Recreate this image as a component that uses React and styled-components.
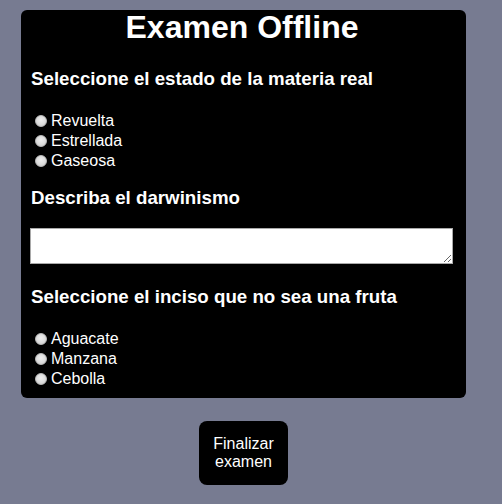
import React from 'react';
import styled, { createGlobalStyle } from 'styled-components';

const GlobalStyle = createGlobalStyle`
  html, body {
    margin: 0;
    padding: 0;
    background: #777b91;
    font-family: "Liberation Sans", Arial, sans-serif;
  }
`;

const Page = styled.div`
  width: 445px;
  margin-left: 21px;
  padding-top: 10px;
  display: flex;
  flex-direction: column;
  align-items: center;
`;

const Card = styled.form`
  box-sizing: border-box;
  width: 100%;
  padding: 0 13px 9px 10px;
  background: #000;
  color: #fff;
  border-radius: 6px;
  display: flex;
  flex-direction: column;
`;

const Title = styled.h1`
  margin: 0;
  font-size: 32px;
  line-height: 35px;
  font-weight: bold;
  text-align: center;
`;

const Question = styled.h3`
  margin: ${(p) => p.gap}px 0 0;
  font-size: 18.72px;
  line-height: 21.5px;
  font-weight: bold;
`;

const Options = styled.div`
  margin-top: ${(p) => p.gap}px;
  display: flex;
  flex-direction: column;
`;

const Option = styled.label`
  display: flex;
  align-items: center;
  height: 20px;
  font-size: 16px;
  line-height: 20px;
`;

const Radio = styled.input.attrs({ type: 'radio' })`
  appearance: none;
  box-sizing: border-box;
  width: 12px;
  height: 12px;
  margin: 0 4px 0 4px;
  border-radius: 50%;
  border: 1px solid #bdbdbd;
  background: radial-gradient(circle at 50% 40%, #eeeeee 0%, #dcdcdc 55%, #c6c6c6 100%);
`;

const Answer = styled.textarea`
  box-sizing: border-box;
  display: block;
  margin: ${(p) => p.gap}px 0 0 -1px;
  width: 423px;
  height: 36px;
  border: 1px solid #a9a9a9;
  background: #fff;
  font-family: "Liberation Mono", monospace;
  font-size: 13px;
`;

const FinishButton = styled.button`
  margin-top: 23px;
  width: 89px;
  height: 64px;
  padding: 0 8px;
  background: #000;
  color: #fff;
  border: none;
  border-radius: 8px;
  font-family: "Liberation Sans", Arial, sans-serif;
  font-size: 16px;
  line-height: 18px;
`;

const questions = [
  { name: 'estado', text: 'Seleccione el estado de la materia real', options: ['Revuelta', 'Estrellada', 'Gaseosa'] },
  { name: 'fruta', text: 'Seleccione el inciso que no sea una fruta', options: ['Aguacate', 'Manzana', 'Cebolla'] },
];

function RadioQuestion({ q, gap }) {
  return (
    <>
      <Question gap={gap}>{q.text}</Question>
      <Options gap={21}>
        {q.options.map((o) => (
          <Option key={o}>
            <Radio name={q.name} value={o} />
            {o}
          </Option>
        ))}
      </Options>
    </>
  );
}

export default function App() {
  return (
    <>
      <GlobalStyle />
      <Page>
        <Card onSubmit={(e) => e.preventDefault()}>
          <Title>Examen Offline</Title>
          <RadioQuestion q={questions[0]} gap={23} />
          <Question gap={16}>Describa el darwinismo</Question>
          <Answer gap={20} />
          <RadioQuestion q={questions[1]} gap={22} />
        </Card>
        <FinishButton>Finalizar examen</FinishButton>
      </Page>
    </>
  );
}
